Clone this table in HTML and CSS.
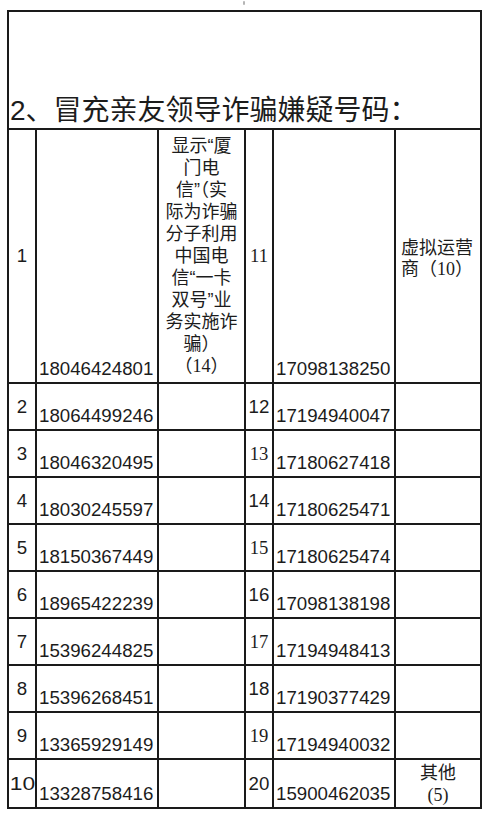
FILE: index.html
```html
<!DOCTYPE html>
<html lang="zh-CN">
<head>
<meta charset="utf-8">
<title>冒充亲友领导诈骗嫌疑号码</title>
<link rel="stylesheet" href="styles.css">
</head>
<body>
<div class="page">
  <div class="speck"></div>
  <table class="sheet">
    <colgroup>
      <col class="c-no">
      <col class="c-num">
      <col class="c-note">
      <col class="c-no2">
      <col class="c-num">
      <col class="c-note2">
    </colgroup>
    <tr class="r-title">
      <td colspan="6" class="title">2、冒充亲友领导诈骗嫌疑号码：</td>
    </tr>
    <tr class="r-first">
      <td class="no">1</td>
      <td class="num">18046424801</td>
      <td class="note">显示“厦<br>门电<br>信”（实<br>际为诈骗<br>分子利用<br>中国电<br>信“一卡<br>双号”业<br>务实施诈<br>骗）<br>（<span class="serif">14</span>）</td>
      <td class="no serif">11</td>
      <td class="num">17098138250</td>
      <td class="note-left">虚拟运营<br>商（<span class="serif">10</span>）</td>
    </tr>
    <tr class="r"><td class="no">2</td><td class="num">18064499246</td><td></td><td class="no">12</td><td class="num">17194940047</td><td></td></tr>
    <tr class="r"><td class="no">3</td><td class="num">18046320495</td><td></td><td class="no serif">13</td><td class="num">17180627418</td><td></td></tr>
    <tr class="r"><td class="no">4</td><td class="num">18030245597</td><td></td><td class="no">14</td><td class="num">17180625471</td><td></td></tr>
    <tr class="r"><td class="no">5</td><td class="num">18150367449</td><td></td><td class="no serif">15</td><td class="num">17180625474</td><td></td></tr>
    <tr class="r"><td class="no">6</td><td class="num">18965422239</td><td></td><td class="no">16</td><td class="num">17098138198</td><td></td></tr>
    <tr class="r"><td class="no">7</td><td class="num">15396244825</td><td></td><td class="no serif">17</td><td class="num">17194948413</td><td></td></tr>
    <tr class="r"><td class="no">8</td><td class="num">15396268451</td><td></td><td class="no">18</td><td class="num">17190377429</td><td></td></tr>
    <tr class="r"><td class="no">9</td><td class="num">13365929149</td><td></td><td class="no serif">19</td><td class="num">17194940032</td><td></td></tr>
    <tr class="r r-last"><td class="no"><span class="stretch">10</span></td><td class="num">13328758416</td><td></td><td class="no">20</td><td class="num">15900462035</td><td class="note">其他<br><span class="serif">(5)</span></td></tr>
  </table>
</div>
</body>
</html>
```

FILE: styles.css
```css
html, body {
  margin: 0;
  padding: 0;
  background: #ffffff;
}

body {
  font-family: "Liberation Sans", "Noto Sans CJK SC", sans-serif;
  color: #1c1c1c;
}

.page {
  position: relative;
  padding: 10px 0 0 7px;
}

.speck {
  position: absolute;
  left: 243px;
  top: 1px;
  width: 2px;
  height: 4px;
  border-radius: 1px;
  background: #b5b5b5;
}

.sheet {
  border-collapse: collapse;
  table-layout: fixed;
  width: 475px;
}

.c-no { width: 28px; }
.c-num { width: 122px; }
.c-note { width: 87px; }
.c-no2 { width: 28px; }
.c-note2 { width: 86px; }

.sheet td {
  border: 2px solid #1a1a1a;
  padding: 0;
  font-size: 18.7px;
  line-height: 20px;
}

.r-title { height: 118px; }
.r-first { height: 254px; }
.r { height: 47px; }
.r-last { height: 49px; }

.sheet td.title {
  vertical-align: bottom;
  font-size: 28px;
  line-height: 28px;
  padding: 0 0 3px 1px;
  white-space: nowrap;
}

.sheet td.no {
  text-align: center;
  vertical-align: middle;
}

.sheet td.num {
  vertical-align: bottom;
  padding: 0 0 3px 2px;
  white-space: nowrap;
}

.sheet td.note {
  text-align: center;
  vertical-align: middle;
  font-size: 18px;
  line-height: 22px;
}

.sheet td.note-left {
  text-align: left;
  vertical-align: middle;
  padding: 6px 0 0 5px;
  font-size: 18px;
  line-height: 21px;
}

.serif {
  font-family: "Liberation Serif", "Noto Sans CJK SC", serif;
}

.stretch {
  display: inline-block;
  transform: scaleX(1.22);
}
```
